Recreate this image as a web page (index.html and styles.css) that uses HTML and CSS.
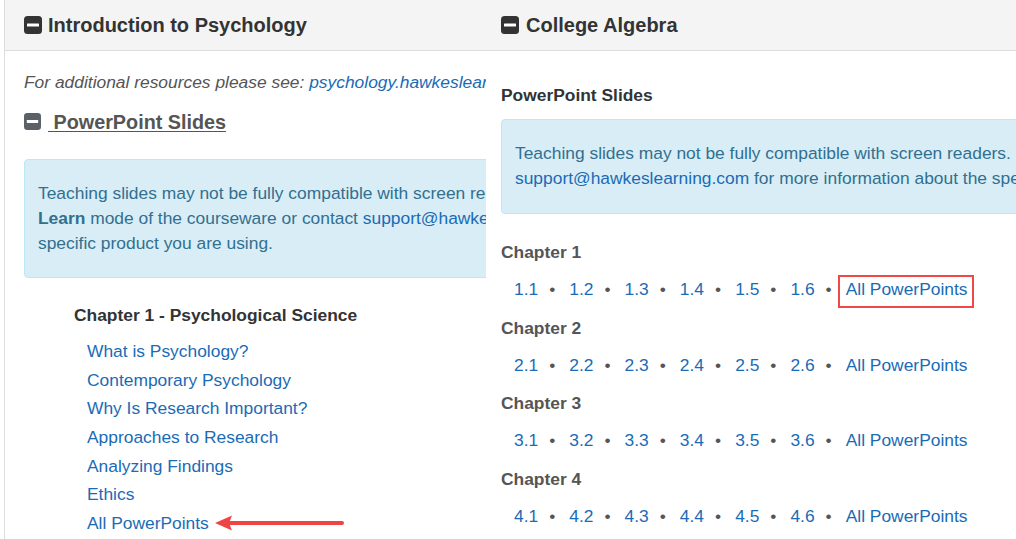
FILE: index.html
```html
<!DOCTYPE html>
<html lang="en">
<head>
<meta charset="utf-8">
<title>PowerPoint Slides</title>
<link rel="stylesheet" href="styles.css">
</head>
<body>
<div class="page">
  <section class="panel panel-left">
    <div class="head">
      <svg class="toggle" width="18" height="18" viewBox="0 0 18 18"><rect x="0" y="0" width="18" height="18" rx="3.5" fill="#333"/><rect x="3" y="7.5" width="12" height="3" rx="0.5" fill="#fff"/></svg>
      <span>Introduction to Psychology</span>
    </div>
    <div class="body body-left">
      <p class="note">For additional resources please see: <a class="link" href="#">psychology.hawkeslearning.com</a></p>
      <h3 class="sec-title"><svg class="sec-icon" width="17" height="17" viewBox="0 0 18 18"><rect x="0" y="0" width="18" height="18" rx="3.5" fill="#5b6168"/><rect x="3" y="7.5" width="12" height="3" rx="0.5" fill="#fff"/></svg><span class="sec-text">&nbsp;PowerPoint Slides</span></h3>
      <div class="alert">Teaching slides may not be fully compatible with screen readers. Please use the<br><b>Learn</b> mode of the courseware or contact <a class="link" href="#">support@hawkeslearning.com</a> for more information about the<br>specific product you are using.</div>
      <h4 class="chap-left">Chapter 1 - Psychological Science</h4>
      <ul class="topics">
        <li><a class="link" href="#">What is Psychology?</a></li>
        <li><a class="link" href="#">Contemporary Psychology</a></li>
        <li><a class="link" href="#">Why Is Research Important?</a></li>
        <li><a class="link" href="#">Approaches to Research</a></li>
        <li><a class="link" href="#">Analyzing Findings</a></li>
        <li><a class="link" href="#">Ethics</a></li>
        <li><a class="link" href="#">All PowerPoints</a><svg class="arrow" width="130" height="18" viewBox="0 0 130 18"><line x1="13" y1="9" x2="127" y2="9" stroke="#ef4444" stroke-width="4" stroke-linecap="round"/><polygon points="0,9 17,1.5 14,9 17,16.5" fill="#ef4444"/></svg></li>
      </ul>
    </div>
  </section>
  <section class="panel panel-right">
    <div class="head">
      <svg class="toggle" width="18" height="18" viewBox="0 0 18 18"><rect x="0" y="0" width="18" height="18" rx="3.5" fill="#333"/><rect x="3" y="7.5" width="12" height="3" rx="0.5" fill="#fff"/></svg>
      <span>College Algebra</span>
    </div>
    <div class="body body-right">
      <h4 class="pp-title">PowerPoint Slides</h4>
      <div class="alert">Teaching slides may not be fully compatible with screen readers. Please use the <b>Learn</b> mode of the courseware or contact<br><a class="link" href="#">support@hawkeslearning.com</a> for more information about the specific product you are using.</div>
      <h4 class="chap">Chapter 1</h4>
      <div class="row"><a class="link" href="#">1.1</a><span class="dot">•</span><a class="link" href="#">1.2</a><span class="dot">•</span><a class="link" href="#">1.3</a><span class="dot">•</span><a class="link" href="#">1.4</a><span class="dot">•</span><a class="link" href="#">1.5</a><span class="dot">•</span><a class="link" href="#">1.6</a><span class="dot">•</span><a class="link marked" href="#">All PowerPoints</a></div>
      <h4 class="chap">Chapter 2</h4>
      <div class="row"><a class="link" href="#">2.1</a><span class="dot">•</span><a class="link" href="#">2.2</a><span class="dot">•</span><a class="link" href="#">2.3</a><span class="dot">•</span><a class="link" href="#">2.4</a><span class="dot">•</span><a class="link" href="#">2.5</a><span class="dot">•</span><a class="link" href="#">2.6</a><span class="dot">•</span><a class="link" href="#">All PowerPoints</a></div>
      <h4 class="chap">Chapter 3</h4>
      <div class="row"><a class="link" href="#">3.1</a><span class="dot">•</span><a class="link" href="#">3.2</a><span class="dot">•</span><a class="link" href="#">3.3</a><span class="dot">•</span><a class="link" href="#">3.4</a><span class="dot">•</span><a class="link" href="#">3.5</a><span class="dot">•</span><a class="link" href="#">3.6</a><span class="dot">•</span><a class="link" href="#">All PowerPoints</a></div>
      <h4 class="chap">Chapter 4</h4>
      <div class="row"><a class="link" href="#">4.1</a><span class="dot">•</span><a class="link" href="#">4.2</a><span class="dot">•</span><a class="link" href="#">4.3</a><span class="dot">•</span><a class="link" href="#">4.4</a><span class="dot">•</span><a class="link" href="#">4.5</a><span class="dot">•</span><a class="link" href="#">4.6</a><span class="dot">•</span><a class="link" href="#">All PowerPoints</a></div>
    </div>
  </section>
</div>
</body>
</html>
```
FILE: styles.css
```css
* { box-sizing: border-box; }
html, body { margin: 0; padding: 0; }
body {
  font-family: "Liberation Sans", Arial, sans-serif;
  font-size: 17.4px;
  line-height: 25px;
  color: #333;
  background: #fff;
}
.page {
  display: flex;
  width: 1016px;
  height: 539px;
  overflow: hidden;
}
.panel {
  flex-shrink: 0;
  overflow: hidden;
}
.panel-left {
  width: 482px;
  margin-left: 4px;
  border-left: 1px solid #ddd;
}
.panel-right {
  width: 530px;
}
.head {
  height: 51px;
  padding-top: 1px;
  background: #f4f4f4;
  border-bottom: 1px solid #ddd;
  display: flex;
  align-items: center;
  gap: 6px;
  font-size: 20px;
  font-weight: bold;
  color: #333;
  white-space: nowrap;
}
.panel-left .head { padding-left: 19px; }
.panel-right .head { padding-left: 15px; gap: 7px; }
.toggle { display: block; flex-shrink: 0; margin-top: -1px; }

.body { white-space: nowrap; }
.body-left { width: 860px; padding-left: 19px; }
.body-right { width: 900px; padding-left: 15px; }

.link { color: #1a6bb6; text-decoration: none; }

.note {
  margin: 19px 0 0;
  font-style: italic;
  color: #555;
}
.sec-title {
  margin: 13px 0 0;
  font-size: 19.8px;
  line-height: 28px;
  font-weight: bold;
  color: #555;
  display: flex;
  align-items: center;
}
.sec-icon { display: block; margin-right: 7px; margin-top: -1px; }
.sec-text { text-decoration: underline; text-underline-offset: 2px; }

.alert {
  background: #d9edf7;
  border: 1px solid #bce8f1;
  border-radius: 4px;
  color: #31708f;
  padding: 21px 13px 21px;
}
.body-left .alert { margin-top: 23px; }
.alert b { font-weight: bold; }

.chap-left {
  margin: 25px 0 0 50px;
  font-size: 17.4px;
  font-weight: bold;
  color: #333;
}
.topics {
  list-style: none;
  margin: 9px 0 0 63px;
  padding: 0;
  line-height: 28.67px;
}
.topics li { display: flex; align-items: center; }
.arrow { display: block; margin-left: 6px; margin-top: -1px; }

.pp-title {
  margin: 32px 0 0;
  font-size: 17.4px;
  font-weight: bold;
  color: #333;
}
.body-right .alert { margin-top: 11px; padding-bottom: 22px; }
.chap {
  margin: 0;
  font-size: 17.4px;
  font-weight: bold;
  color: #555;
}
.body-right .alert + .chap { margin-top: 26px; }
.row {
  margin: 12px 0 13.5px;
  padding-left: 13px;
}
.dot { color: #555; margin: 0 14px 0 11px; }
.marked {
  position: relative;
  display: inline-block;
}
.marked::after {
  content: "";
  position: absolute;
  left: -8px;
  right: -7px;
  top: -2px;
  bottom: -6px;
  border: 2px solid #f04848;
}
```
